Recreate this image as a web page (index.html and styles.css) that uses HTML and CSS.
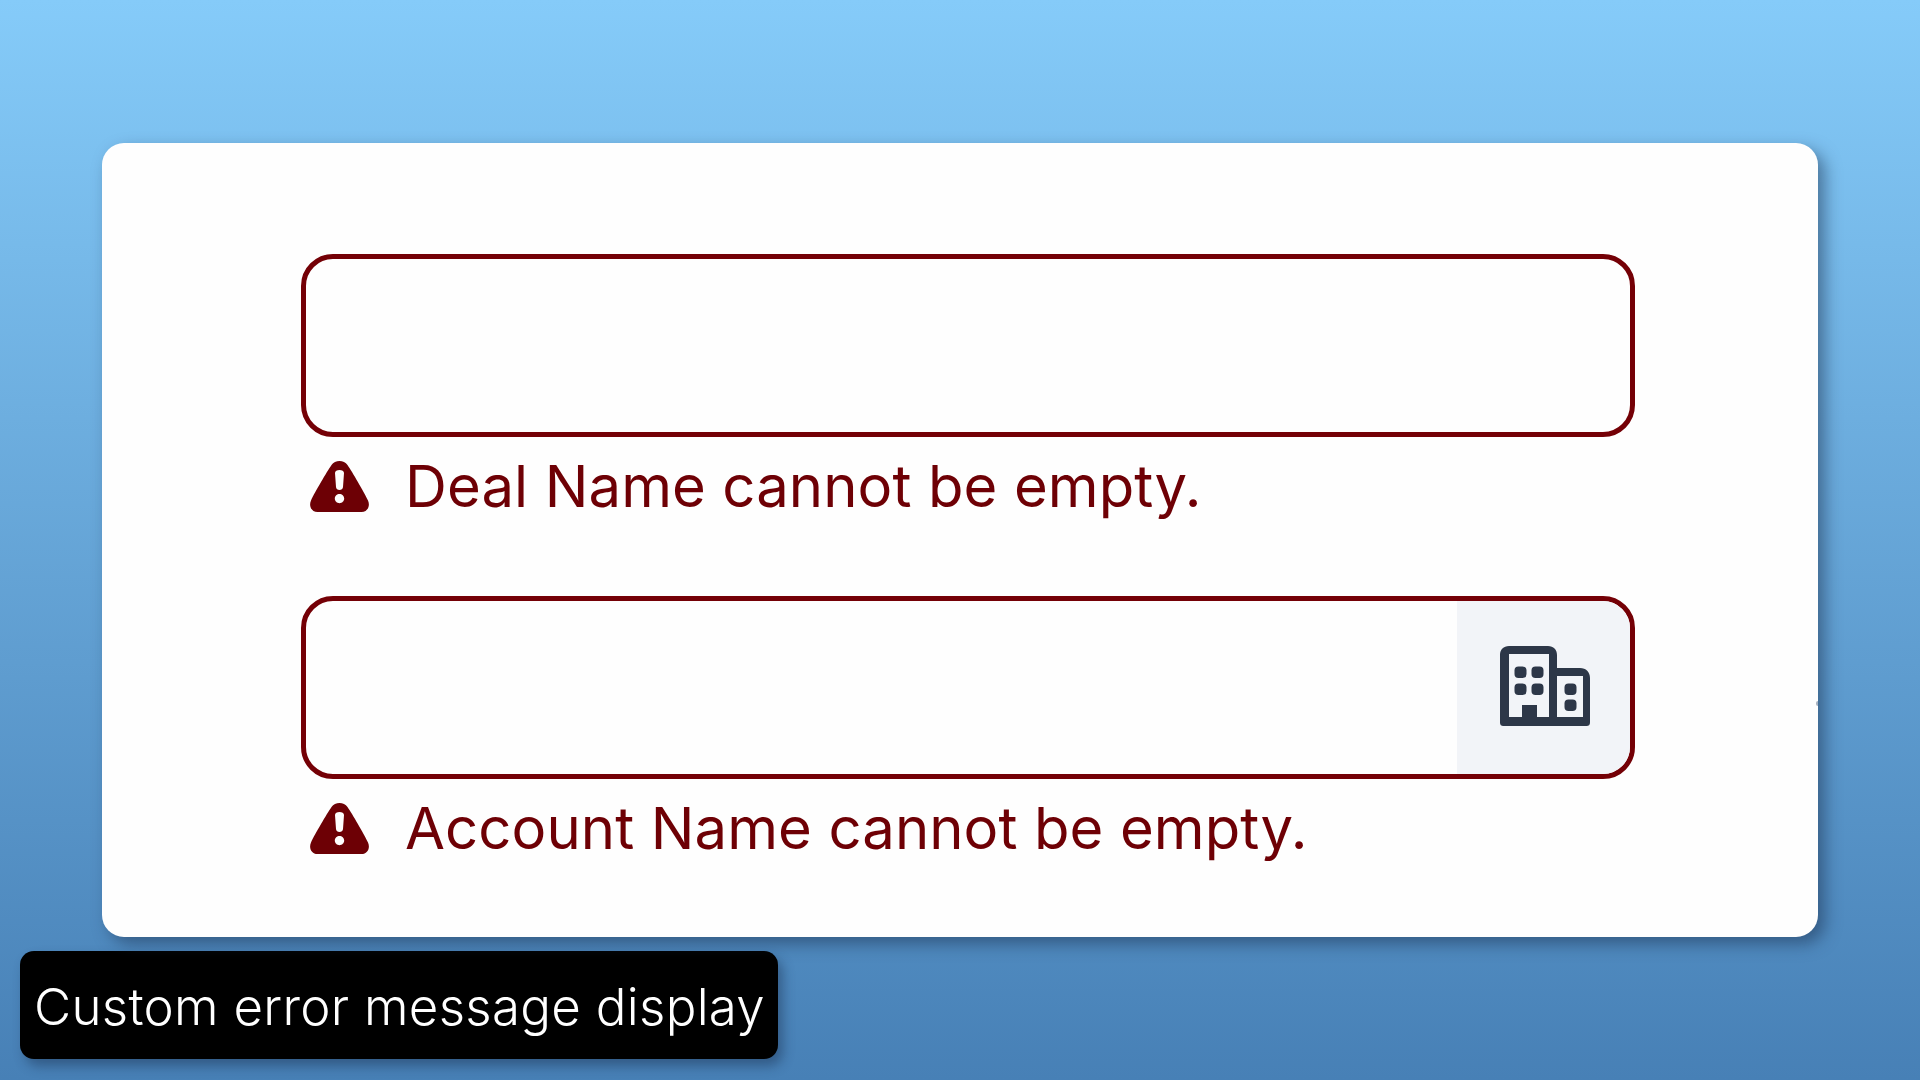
FILE: index.html
```html
<!DOCTYPE html>
<html lang="en">
<head>
<meta charset="utf-8">
<title>Custom error message display</title>
<link rel="stylesheet" href="styles.css">
</head>
<body>
<svg class="defs" width="0" height="0" aria-hidden="true">
  <symbol id="warn" viewBox="0 0 59 51">
    <path fill-rule="evenodd" d="M21.500 4C25 -1.300 34 -1.300 37.500 4C42 10.500 54 31 58 39.500C60.500 45 57.500 51 51.500 51H7.500C1.500 51 -1.500 45 1 39.500C5 31 17 10.500 21.500 4ZM25 12C25 10 27 9 29.500 9C32 9 34 10 34 12L33 26C32.900 27.800 31.300 29 29.500 29C27.700 29 26.100 27.800 26 26ZM29.500 33C32 33 34.200 35 34.200 37.600C34.200 40.200 32 42.300 29.500 42.300C27 42.300 24.800 40.200 24.800 37.600C24.800 35 27 33 29.500 33Z"/>
  </symbol>
</svg>
<main class="card">
  <section class="field">
    <div class="input"></div>
    <p class="error"><svg class="warn-icon"><use href="#warn"/></svg><span>Deal Name cannot be empty.</span></p>
  </section>
  <section class="field">
    <div class="input">
      <div class="addon">
        <svg class="building" viewBox="0 0 90 80" aria-hidden="true">
          <path fill-rule="evenodd" d="M9 0H48C53.500 0 57 3.500 57 9V22H80C86 22 90 26 90 32V76C90 79 89 80 86 80H4C1 80 0 79 0 76V9C0 3.500 3.500 0 9 0ZM9 8V71H22V59H37V71H49V8ZM57 30V71H83V30Z"/>
          <rect x="14.500" y="20.500" width="12" height="11.500" rx="4"/>
          <rect x="31.500" y="20.500" width="12" height="11.500" rx="4"/>
          <rect x="14.500" y="37.500" width="12" height="11.500" rx="4"/>
          <rect x="31.500" y="37.500" width="12" height="11.500" rx="4"/>
          <rect x="64.500" y="37.500" width="12" height="11.500" rx="4"/>
          <rect x="64.500" y="53.500" width="12" height="11.500" rx="4"/>
        </svg>
      </div>
    </div>
    <p class="error"><svg class="warn-icon"><use href="#warn"/></svg><span>Account Name cannot be empty.</span></p>
  </section>
  <span class="edge-mark"></span>
</main>
<div class="caption">Custom error message display</div>
</body>
</html>
```
FILE: styles.css
```css
* { box-sizing: border-box; }
html, body { height: 100%; }
body {
  margin: 0;
  padding: 143px 0 0 20px;
  overflow: hidden;
  display: flex;
  flex-direction: column;
  align-items: flex-start;
  background: linear-gradient(180deg, #85cbf9 0%, #4780b6 100%);
  font-family: Inter, "Noto Sans", sans-serif;
}
.defs { position: absolute; }
.card {
  position: relative;
  width: 1716px;
  height: 794px;
  margin-left: 82px;
  padding: 111px 0 0 199px;
  background: #fefefe;
  border-radius: 22px;
  box-shadow: 7px 7px 16px rgba(25, 45, 75, 0.5);
  display: flex;
  flex-direction: column;
  gap: 75px;
}
.edge-mark {
  position: absolute;
  right: 0;
  top: 558px;
  width: 2px;
  height: 5px;
  background: #a9b3c0;
  border-radius: 2px 0 0 2px;
}
.field { width: 1334px; }
.input {
  height: 183px;
  border: 5px solid #740006;
  border-radius: 32px;
  background: #fefefe;
  display: flex;
  justify-content: flex-end;
  overflow: hidden;
}
.addon {
  width: 173px;
  padding: 0 0 3px 3px;
  background: #f2f4f8;
  display: flex;
  align-items: center;
  justify-content: center;
}
.building { width: 90px; height: 80px; fill: #2d3748; }
.error {
  margin: 14px 0 0;
  height: 70px;
  padding-left: 9px;
  display: flex;
  align-items: center;
  gap: 36px;
  color: #6e0005;
  font-size: 58px;
  line-height: 72px;
  letter-spacing: 0.1px;
}
.warn-icon { width: 59px; height: 51px; fill: #6d0005; flex: none; }
.caption {
  margin-top: 14px;
  width: 758px;
  height: 108px;
  padding: 3px 0 0 14px;
  display: flex;
  align-items: center;
  background: #000;
  color: #fff;
  font-size: 51px;
  font-weight: 300;
  letter-spacing: 0.3px;
  border-radius: 14px;
  box-shadow: 5px 7px 12px rgba(25, 45, 75, 0.45);
  white-space: nowrap;
}
```
